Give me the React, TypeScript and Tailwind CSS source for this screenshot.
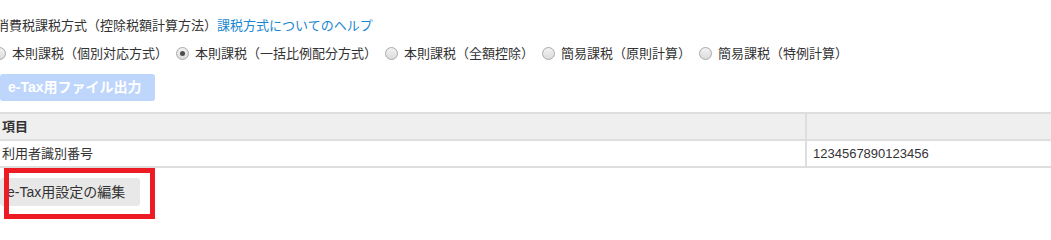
import { useState } from 'react'

const options = [
  '本則課税（個別対応方式）',
  '本則課税（一括比例配分方式）',
  '本則課税（全額控除）',
  '簡易課税（原則計算）',
  '簡易課税（特例計算）',
]

function Radio({ checked }: { checked: boolean }) {
  return (
    <span className="flex h-[13px] w-[13px] shrink-0 items-center justify-center rounded-full border border-[#a9a9a9] bg-gradient-to-b from-[#f2f2f2] to-[#dcdcdc]">
      {checked && <span className="h-[5px] w-[5px] rounded-full bg-[#4d4d4d]" />}
    </span>
  )
}

export default function App() {
  const [method, setMethod] = useState(1)

  return (
    <div className="relative h-[224px] w-[1051px] overflow-hidden bg-white text-[13px] text-[#333] [font-family:'Liberation_Sans','Noto_Sans_CJK_JP',sans-serif]">
      <div className="-ml-[4px] pt-[16px] leading-[19px]">
        消費税課税方式（控除税額計算方法）
        <a className="text-[#1a87d0]">課税方式についてのヘルプ</a>
      </div>
      <div className="-ml-[7px] mt-[9px] flex h-[19px] items-center">
        {options.map((label, i) => (
          <label
            key={label}
            className="mr-[8px] flex items-center gap-[6px] whitespace-nowrap"
            onClick={() => setMethod(i)}
          >
            <Radio checked={method === i} />
            <span>{label}</span>
          </label>
        ))}
      </div>
      <button className="mt-[11px] flex h-[27px] w-[155px] items-center rounded-[3px] bg-[#bed5fc] pl-[8px] text-[14px] font-bold text-white">
        e-Tax用ファイル出力
      </button>
      <table className="mt-[11px] w-[1060px] border-collapse">
        <thead>
          <tr className="h-[27px] bg-[#efefef]">
            <th className="w-[806px] border-y-2 border-[#dedede] pl-[2px] text-left font-bold">項目</th>
            <th className="border-y-2 border-l-2 border-[#dedede]" />
          </tr>
        </thead>
        <tbody>
          <tr className="h-[27px]">
            <td className="border-b-2 border-[#dedede] pl-[2px]">利用者識別番号</td>
            <td className="border-b-2 border-l-2 border-[#dedede] pl-[6px] [font-family:'Liberation_Sans',sans-serif]">
              1234567890123456
            </td>
          </tr>
        </tbody>
      </table>
      <button className="mt-[10px] flex h-[28px] w-[140px] items-center rounded-[3px] bg-[#e8e8e8] pl-[7px] text-[14px] text-[#333]">
        e-Tax用設定の編集
      </button>
      <div className="pointer-events-none absolute left-[4px] top-[168px] h-[51px] w-[151px] border-[5px] border-[#ed1c24]" />
    </div>
  )
}
